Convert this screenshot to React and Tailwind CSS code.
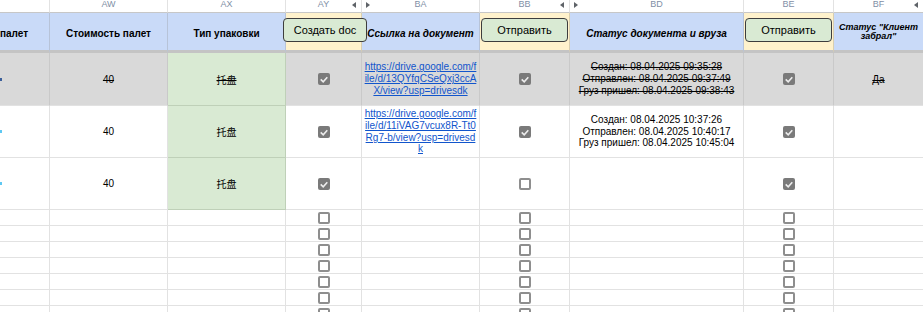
import React from 'react'

// ширины колонок: граница каждой колонки — последний пиксель её ширины
const grid = 'grid grid-cols-[50px_118px_118px_76px_118px_90px_174px_90px_90px]'

const letters = ['', 'AW', 'AX', 'AY', 'BA', 'BB', 'BD', 'BE', 'BF']

const rows = [
  {
    struck: true,
    gray: true,
    mark: 'bg-[#3b5f9a]',
    h: 'h-[53px]',
    ay: true,
    bb: true,
    be: true,
    link: ['https://drive.google.com/f', 'ile/d/13QYfqCSeQxj3ccA', 'X/view?usp=drivesdk'],
    status: [
      'Создан: 08.04.2025 09:35:28',
      'Отправлен: 08.04.2025 09:37:49',
      'Груз пришел: 08.04.2025 09:38:43',
    ],
    bf: 'Да',
  },
  {
    mark: 'bg-[#5ec8f2]',
    h: 'h-[52px]',
    ay: true,
    bb: true,
    be: true,
    link: ['https://drive.google.com/f', 'ile/d/11iVAG7vcux8R-Tt0', 'Rg7-b/view?usp=drivesd', 'k'],
    status: [
      'Создан: 08.04.2025 10:37:26',
      'Отправлен: 08.04.2025 10:40:17',
      'Груз пришел: 08.04.2025 10:45:04',
    ],
  },
  {
    mark: 'bg-[#5ec8f2]',
    h: 'h-[52px]',
    ay: true,
    bb: false,
    be: true,
  },
]

const Checkbox = ({ checked }) =>
  checked ? (
    <span className="flex h-[12px] w-[12px] items-center justify-center rounded-[2px] bg-[#7a7a7a]">
      <svg viewBox="0 0 12 12" className="h-[12px] w-[12px]">
        <path d="M2.7 6.4 5.2 8.8 9.3 4.2" fill="none" stroke="#ececec" strokeWidth="1.6" />
      </svg>
    </span>
  ) : (
    <span className="block h-[12px] w-[12px] rounded-[2px] border-2 border-[#8e8e8e] bg-white" />
  )

const Arrow = ({ dir, className }) => (
  <svg viewBox="0 0 4 6" className={`absolute top-[2px] h-[6px] w-[4px] ${className}`}>
    <path d={dir === 'left' ? 'M4 0 0 3 4 6z' : 'M0 0 4 3 0 6z'} fill="#5f6368" />
  </svg>
)

const Button = ({ children, className }) => (
  <div
    className={`absolute top-[18px] flex h-[24px] items-center justify-center rounded-[4px] border border-[#3d3d3d] bg-[#d9ead3] text-[11px] text-black ${className}`}
  >
    {children}
  </div>
)

const Cell = ({ children, className = '' }) => (
  <div className={`flex items-center justify-center overflow-hidden border-r border-b text-center ${className}`}>
    {children}
  </div>
)

const DataRow = ({ row }) => {
  const bg = row.gray ? 'bg-[#d9d9d9] border-r-[#c9c9c9]' : 'bg-white border-r-[#e2e2e2]'
  const line = row.struck ? 'line-through' : ''
  return (
    <div className={`${grid} ${row.h}`}>
      <Cell className={`${bg} border-b-[#e2e2e2] justify-start`}>
        <span className={`h-[3px] w-[2px] ${row.mark}`} />
      </Cell>
      <Cell className={`${bg} border-b-[#e2e2e2] text-[10px] ${line}`}>40</Cell>
      <Cell className={`bg-[#d9ead3] border-r-[#bfd0b8] border-b-[#bfd0b8] text-[10px] ${line}`}>
        <span className="font-['Noto_Sans_CJK_SC','Liberation_Sans',sans-serif]">托盘</span>
      </Cell>
      <Cell className={`${bg} border-b-[#e2e2e2]`}>
        <Checkbox checked={row.ay} />
      </Cell>
      <Cell className={`${bg} border-b-[#e2e2e2] px-[2px]`}>
        {row.link && (
          <div className={`text-[10px] leading-[11.7px] text-[#1155cc] underline ${row.struck ? 'line-through' : ''}`}>
            {row.link.map((l) => (
              <div key={l}>{l}</div>
            ))}
          </div>
        )}
      </Cell>
      <Cell className={`${bg} border-b-[#e2e2e2]`}>
        <Checkbox checked={row.bb} />
      </Cell>
      <Cell className={`${bg} border-b-[#e2e2e2]`}>
        {row.status && (
          <div className={`text-[10px] leading-[11.7px] whitespace-nowrap ${line}`}>
            {row.status.map((s) => (
              <div key={s}>{s}</div>
            ))}
          </div>
        )}
      </Cell>
      <Cell className={`${bg} border-b-[#e2e2e2]`}>
        <Checkbox checked={row.be} />
      </Cell>
      <Cell className={`${bg} border-b-[#e2e2e2] text-[10px] ${line}`}>{row.bf}</Cell>
    </div>
  )
}

const EmptyRow = () => (
  <div className={`${grid} h-[16px]`}>
    {letters.map((l, i) => (
      <Cell key={i} className="border-[#e2e2e2] bg-white">
        {(i === 3 || i === 5 || i === 7) && <Checkbox checked={false} />}
      </Cell>
    ))}
  </div>
)

export default function App() {
  return (
    <div className="relative h-[312px] w-[923px] overflow-hidden bg-white font-['Liberation_Sans',Arial,sans-serif] text-black">
      {/* буквы колонок */}
      <div className={`${grid} h-[13px]`}>
        {letters.map((l, i) => (
          <div
            key={i}
            className="relative flex justify-center border-r border-b border-r-[#e2e2e2] border-b-[#c7c7c7] bg-white"
          >
            <span className="-mt-[2px] text-[9px] leading-[12px] text-[#7f8fa6]">{l}</span>
            {(l === 'AY' || l === 'BB' || l === 'BF') && <Arrow dir="left" className="right-[5px]" />}
            {(l === 'BA' || l === 'BD') && <Arrow dir="right" className="left-[4px]" />}
          </div>
        ))}
      </div>

      {/* шапка */}
      <div className={`${grid} h-[40px] text-[10px] font-bold`}>
        <Cell className="border-r-[#b7c3d8] border-b-[3px] border-b-[#c4c4c4] bg-[#c9daf8] justify-start pt-[3px] whitespace-nowrap">
          палет
        </Cell>
        <Cell className="border-r-[#b7c3d8] border-b-[3px] border-b-[#c4c4c4] bg-[#c9daf8] pt-[3px]">
          Стоимость палет
        </Cell>
        <Cell className="border-r-[#b7c3d8] border-b-[3px] border-b-[#c4c4c4] bg-[#c9daf8] pt-[3px]">
          Тип упаковки
        </Cell>
        <Cell className="border-r-[#d8ceb0] border-b-[3px] border-b-[#c4c4c4] bg-[#fff2cc]" />
        <Cell className="border-r-[#b7c3d8] border-b-[3px] border-b-[#c4c4c4] bg-[#c9daf8] pt-[3px] italic">
          Ссылка на документ
        </Cell>
        <Cell className="border-r-[#d8ceb0] border-b-[3px] border-b-[#c4c4c4] bg-[#fff2cc]" />
        <Cell className="border-r-[#b7c3d8] border-b-[3px] border-b-[#c4c4c4] bg-[#c9daf8] pt-[3px] italic">
          Статус документа и вруза
        </Cell>
        <Cell className="border-r-[#d8ceb0] border-b-[3px] border-b-[#c4c4c4] bg-[#fff2cc]" />
        <Cell className="border-r-[#b7c3d8] border-b-[3px] border-b-[#c4c4c4] bg-[#c9daf8] pt-[1px] italic">
          <span className="text-[9px] leading-[9px]">
            Статус "Клиент
            <br />
            забрал"
          </span>
        </Cell>
      </div>

      {rows.map((row, i) => (
        <DataRow key={i} row={row} />
      ))}
      {Array.from({ length: 7 }).map((_, i) => (
        <EmptyRow key={i} />
      ))}

      {/* кнопки-рисунки поверх листа */}
      <Button className="left-[283px] w-[84px]">Создать doc</Button>
      <Button className="left-[481px] w-[87px]">Отправить</Button>
      <Button className="left-[745px] w-[87px]">Отправить</Button>
    </div>
  )
}
